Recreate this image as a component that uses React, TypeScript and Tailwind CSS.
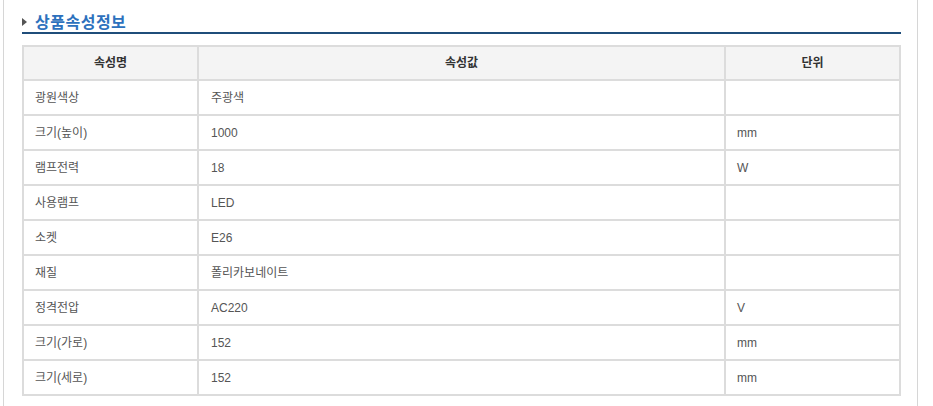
const rows = [
  { name: "광원색상", value: "주광색", unit: "" },
  { name: "크기(높이)", value: "1000", unit: "mm" },
  { name: "램프전력", value: "18", unit: "W" },
  { name: "사용램프", value: "LED", unit: "" },
  { name: "소켓", value: "E26", unit: "" },
  { name: "재질", value: "폴리카보네이트", unit: "" },
  { name: "정격전압", value: "AC220", unit: "V" },
  { name: "크기(가로)", value: "152", unit: "mm" },
  { name: "크기(세로)", value: "152", unit: "mm" },
];

export default function App() {
  return (
    <div className="w-[933px] h-[406px] bg-white overflow-hidden font-['Liberation_Sans','Noto_Sans_CJK_KR',sans-serif]">
      <div className="ml-[3px] w-[915px] h-[406px] border-x border-[#d6d6d6] pl-[18px] pr-[16px] pt-[11px]">
        <div className="flex items-center h-[20px]">
          <span className="w-0 h-0 border-y-[4px] border-y-transparent border-l-[5px] border-l-[#555] mr-[8px] mt-[2px]" />
          <h2 className="text-[16px] leading-[20px] font-bold text-[#2d71bd] tracking-[0.5px] font-['Noto_Sans_CJK_KR',sans-serif]">
            상품속성정보
          </h2>
        </div>
        <div className="mt-[1px] h-[2px] bg-[#1f4d7a]" />
        <table className="mt-[11px] w-[877px] border-collapse table-fixed text-[12px] text-[#555]">
          <colgroup>
            <col className="w-[175px]" />
            <col className="w-[527px]" />
            <col className="w-[175px]" />
          </colgroup>
          <thead>
            <tr className="bg-[#f4f4f4] h-[34px]">
              <th className="border-2 border-[#dcdcdc] font-bold text-[#333]">속성명</th>
              <th className="border-2 border-[#dcdcdc] font-bold text-[#333]">속성값</th>
              <th className="border-2 border-[#dcdcdc] font-bold text-[#333]">단위</th>
            </tr>
          </thead>
          <tbody>
            {rows.map((r) => (
              <tr key={r.name} className="h-[35px]">
                <td className="border-2 border-[#dcdcdc] pl-[11px]">{r.name}</td>
                <td className="border-2 border-[#dcdcdc] pl-[12px]">{r.value}</td>
                <td className="border-2 border-[#dcdcdc] pl-[11px]">{r.unit}</td>
              </tr>
            ))}
          </tbody>
        </table>
      </div>
    </div>
  );
}
